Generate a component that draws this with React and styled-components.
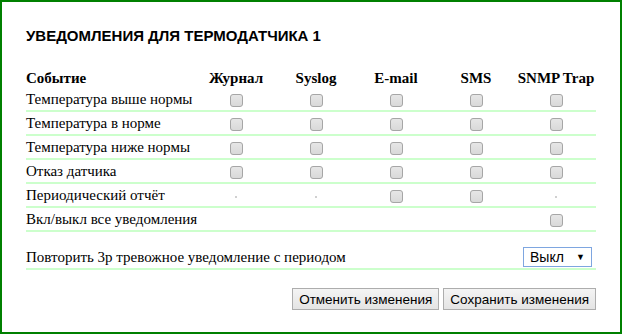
import React from "react";
import styled, { createGlobalStyle } from "styled-components";

const Global = createGlobalStyle`
  html, body { margin: 0; padding: 0; background: #fff; }
  body { font-family: "Liberation Serif", "Times New Roman", serif; }
`;

const Panel = styled.div`
  box-sizing: border-box;
  width: 622px;
  height: 334px;
  border: 2px solid #008000;
  padding: 24px 24px 0 24px;
  background: #fff;
`;

const Title = styled.h2`
  margin: 0 0 22px 0;
  font-family: "Liberation Sans", Arial, sans-serif;
  font-weight: bold;
  font-size: 15px;
  line-height: 20px;
  color: #000;
`;

const Table = styled.table`
  width: 570px;
  border-collapse: collapse;
  table-layout: fixed;
`;

const HeadCell = styled.th`
  font-family: "Liberation Serif", "Times New Roman", serif;
  font-weight: bold;
  font-size: 15px;
  line-height: 20px;
  height: 20px;
  padding: 0;
  text-align: ${(p) => (p.$left ? "left" : "center")};
  width: ${(p) => (p.$left ? "170px" : "80px")};
  color: #000;
`;

const Row = styled.tr`
  border-bottom: 2px solid #ccffcc;
`;

const Cell = styled.td`
  font-size: 15px;
  line-height: 22px;
  height: 22px;
  padding: 0;
  text-align: ${(p) => (p.$left ? "left" : "center")};
  vertical-align: middle;
  color: #000;
  white-space: nowrap;
`;

const Box = styled.input.attrs({ type: "checkbox" })`
  appearance: none;
  -webkit-appearance: none;
  box-sizing: border-box;
  width: 13px;
  height: 13px;
  margin: 0;
  border: 1px solid #a6a6a6;
  border-radius: 3px;
  background: linear-gradient(#e6e6e6, #d9d9d9);
  vertical-align: middle;
  display: inline-block;
`;

const Dot = styled.span`
  display: inline-block;
  width: 2px;
  height: 2px;
  background: #d0d0d0;
  vertical-align: middle;
`;

const RepeatRow = styled.div`
  width: 570px;
  margin-top: 14px;
  display: flex;
  align-items: center;
  justify-content: space-between;
  height: 22px;
  border-bottom: 2px solid #ccffcc;
  box-sizing: content-box;
  font-size: 15px;
`;

const SelectBox = styled.div`
  box-sizing: border-box;
  width: 69px;
  height: 20px;
  margin-right: 4px;
  border: 1px solid #7ea6e0;
  display: flex;
  align-items: center;
  justify-content: space-between;
  padding: 0 6px 0 6px;
  font-family: "Liberation Sans", Arial, sans-serif;
  font-size: 14px;
  color: #000;
  background: #fff;
`;

const Arrow = styled.span`
  font-size: 9px;
  line-height: 1;
`;

const ButtonBar = styled.div`
  width: 570px;
  margin-top: 18px;
  display: flex;
  justify-content: flex-end;
  gap: 4px;
`;

const Button = styled.button`
  box-sizing: border-box;
  height: 22px;
  padding: 0 6px;
  font-family: "Liberation Sans", Arial, sans-serif;
  font-size: 13.5px;
  color: #000;
  border: 1px solid #adadad;
  border-radius: 0;
  background: linear-gradient(#f4f4f4, #e4e4e4);
`;

const cols = ["Журнал", "Syslog", "E-mail", "SMS", "SNMP Trap"];

const rows = [
  { name: "Температура выше нормы", cells: ["b", "b", "b", "b", "b"] },
  { name: "Температура в норме", cells: ["b", "b", "b", "b", "b"] },
  { name: "Температура ниже нормы", cells: ["b", "b", "b", "b", "b"] },
  { name: "Отказ датчика", cells: ["b", "b", "b", "b", "b"] },
  { name: "Периодический отчёт", cells: ["d", "d", "b", "b", "d"] },
  { name: "Вкл/выкл все уведомления", cells: ["", "", "", "", "b"] },
];

export default function App() {
  return (
    <>
      <Global />
      <Panel>
        <Title>УВЕДОМЛЕНИЯ ДЛЯ ТЕРМОДАТЧИКА 1</Title>
        <Table>
          <thead>
            <tr>
              <HeadCell $left>Событие</HeadCell>
              {cols.map((c) => (
                <HeadCell key={c}>{c}</HeadCell>
              ))}
            </tr>
          </thead>
          <tbody>
            {rows.map((r) => (
              <Row key={r.name}>
                <Cell $left>{r.name}</Cell>
                {r.cells.map((c, i) => (
                  <Cell key={i}>
                    {c === "b" ? <Box readOnly /> : c === "d" ? <Dot /> : null}
                  </Cell>
                ))}
              </Row>
            ))}
          </tbody>
        </Table>
        <RepeatRow>
          <span>Повторить 3р тревожное уведомление с периодом</span>
          <SelectBox>
            <span>Выкл</span>
            <Arrow>▼</Arrow>
          </SelectBox>
        </RepeatRow>
        <ButtonBar>
          <Button>Отменить изменения</Button>
          <Button>Сохранить изменения</Button>
        </ButtonBar>
      </Panel>
    </>
  );
}
